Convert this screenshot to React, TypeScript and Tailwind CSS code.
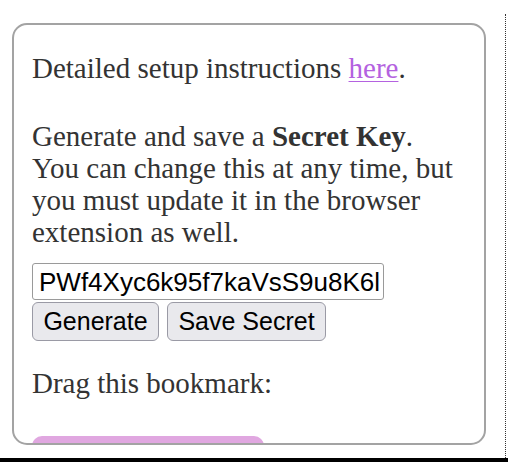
import React from "react";

export default function App() {
  return (
    <div className="w-[508px] h-[462px] bg-white flex flex-col overflow-hidden">
      <div className="flex-1 flex flex-row items-stretch min-h-0">
        <div className="w-[505px] shrink-0 pl-[12px] pt-[23px]">
          <div
            className="w-[474px] h-[422px] border-2 border-[#a3a3a3] rounded-[15px] overflow-hidden px-[18px] text-[#333333] text-[29px] leading-[32px]"
            style={{ fontFamily: '"Liberation Serif", "Times New Roman", serif' }}
          >
            <p className="mt-[27px]">
              Detailed setup instructions{" "}
              <a href="#" className="text-[#b462e0] underline decoration-1 underline-offset-[3px]">
                here
              </a>
              .
            </p>
            <p className="mt-[36px]">
              Generate and save a <b className="font-bold">Secret Key</b>. You can change this at any time, but you must
              update it in the browser extension as well.
            </p>
            <div
              className="mt-[15px] w-[352px] h-[37px] border border-[#9a9a9a] rounded-[3px] bg-white pl-[6px] overflow-hidden whitespace-nowrap flex items-center text-black text-[26px] leading-none"
              style={{ fontFamily: '"Liberation Sans", Arial, sans-serif' }}
            >
              PWf4Xyc6k95f7kaVsS9u8K6l
            </div>
            <div
              className="mt-[2px] flex flex-row gap-[8px] text-black text-[25px] leading-none"
              style={{ fontFamily: '"Liberation Sans", Arial, sans-serif' }}
            >
              <button className="w-[127px] h-[39px] bg-[#e9e9ed] border border-[#9a9aa5] rounded-[6px] flex items-center justify-center">
                Generate
              </button>
              <button className="w-[159px] h-[39px] bg-[#e9e9ed] border border-[#9a9aa5] rounded-[6px] flex items-center justify-center">
                Save Secret
              </button>
            </div>
            <p className="mt-[26px]">Drag this bookmark:</p>
            <div className="mt-[37px] w-[232px] h-[40px] bg-[#e0a7e0] rounded-t-[10px]" />
          </div>
        </div>
        <div className="w-[3px] shrink-0 mt-[14px] border-l border-dotted border-[#333333]" />
      </div>
      <div className="h-[4px] bg-black shrink-0" />
    </div>
  );
}
